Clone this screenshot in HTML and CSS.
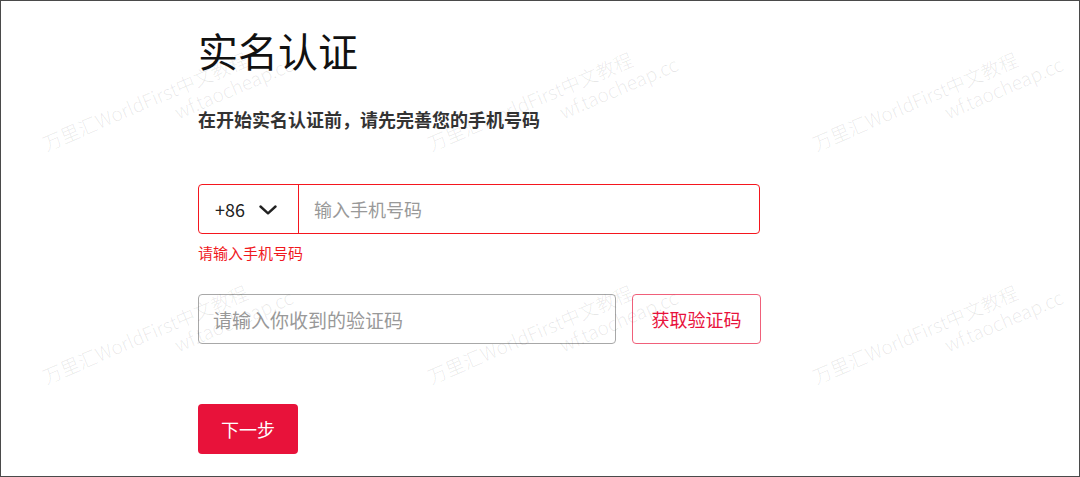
FILE: index.html
```html
<!DOCTYPE html>
<html>
<head>
<meta charset="utf-8" />
<title>实名认证</title>
<link rel="stylesheet" href="styles.css">
</head>
<body>
  <div class="page">
    <div class="form">
      <h1 class="title">实名认证</h1>
      <p class="lead">在开始实名认证前，请先完善您的手机号码</p>

      <div class="phone">
        <div class="code-select">
          <span>+86</span>
          <svg class="chev" width="18" height="10" viewBox="0 0 18 10"><path d="M1.5 1.5 L9 8.3 L16.5 1.5" fill="none" stroke="#222" stroke-width="2.4" stroke-linecap="round" stroke-linejoin="round"/></svg>
        </div>
        <input class="phone-input" type="text" placeholder="输入手机号码">
      </div>
      <p class="error">请输入手机号码</p>

      <div class="verify">
        <input class="verify-input" type="text" placeholder="请输入你收到的验证码">
        <button class="get-code">获取验证码</button>
      </div>

      <button class="next">下一步</button>
    </div>

    <div class="watermark">
      <div class="tile"><div class="mark"><span>万里汇WorldFirst中文教程</span><span class="site">wf.taocheap.cc</span></div></div>
      <div class="tile"><div class="mark"><span>万里汇WorldFirst中文教程</span><span class="site">wf.taocheap.cc</span></div></div>
      <div class="tile"><div class="mark"><span>万里汇WorldFirst中文教程</span><span class="site">wf.taocheap.cc</span></div></div>
      <div class="tile"><div class="mark"><span>万里汇WorldFirst中文教程</span><span class="site">wf.taocheap.cc</span></div></div>
      <div class="tile"><div class="mark"><span>万里汇WorldFirst中文教程</span><span class="site">wf.taocheap.cc</span></div></div>
      <div class="tile"><div class="mark"><span>万里汇WorldFirst中文教程</span><span class="site">wf.taocheap.cc</span></div></div>
    </div>
  </div>
</body>
</html>
```

FILE: styles.css
```css
html, body {
  margin:0;
  padding:0;
  background:#fff;
}

body {
  font-family:"Noto Sans CJK SC", "Noto Sans", sans-serif;
  color:#222;
}

.page {
  position:relative;
  box-sizing:border-box;
  height:100vh;
  border:1px solid #4a4a4a;
  overflow:hidden;
}

.form {
  display:flex;
  flex-direction:column;
  align-items:flex-start;
  padding:29px 0 0 197px;
}

.title {
  margin:0;
  font-size:40px;
  line-height:40px;
  font-weight:normal;
  color:#111;
}

.lead {
  margin:40px 0 0;
  font-size:18px;
  line-height:18px;
  font-weight:bold;
  color:#333;
}

.phone {
  display:flex;
  box-sizing:border-box;
  width:562px;
  height:50px;
  margin-top:56px;
  border:1px solid #f5161e;
  border-radius:4px;
}

.code-select {
  display:flex;
  align-items:center;
  gap:14px;
  box-sizing:border-box;
  width:100px;
  padding-left:16px;
  border-right:1px solid #f5161e;
  font-size:18px;
  color:#222;
}

.chev {
  margin-top:2px;
}

input {
  border:0;
  outline:0;
  background:transparent;
  font-family:inherit;
  color:#333;
}

input::placeholder {
  color:#999;
}

.phone-input {
  flex:1;
  padding:0 15px;
  font-size:18px;
}

.error {
  margin:9px 0 0;
  font-size:15px;
  line-height:20px;
  color:#f0191e;
}

.verify {
  display:flex;
  gap:16px;
  margin-top:31px;
}

.verify-input {
  box-sizing:border-box;
  width:418px;
  height:50px;
  padding:0 14px;
  border:1px solid #a8a8a8;
  border-radius:4px;
  font-size:19px;
}

button {
  font-family:inherit;
  cursor:pointer;
}

.get-code {
  box-sizing:border-box;
  width:129px;
  height:50px;
  border:1px solid #f0607a;
  border-radius:4px;
  background:#fff;
  color:#e8123c;
  font-size:18px;
}

.next {
  width:100px;
  height:50px;
  margin-top:60px;
  border:0;
  border-radius:4px;
  background:#e8123a;
  color:#fff;
  font-size:18px;
}

/* watermark sits over the whole page */
.watermark {
  position:absolute;
  top:0;
  left:0;
  right:0;
  bottom:0;
  display:grid;
  grid-template-columns:repeat(3, 385px);
  grid-auto-rows:233px;
  pointer-events:none;
}

.tile {
  position:relative;
}

.mark {
  position:absolute;
  left:38px;
  top:133px;
  display:flex;
  flex-direction:column;
  white-space:nowrap;
  transform:rotate(-23deg);
  transform-origin:0 0;
  font-family:"Noto Sans CJK SC", "Open Sans", sans-serif;
  font-weight:300;
  font-size:19px;
  line-height:22px;
  color:rgba(0,0,0,0.09);
}

.site {
  margin-left:134px;
}
```
